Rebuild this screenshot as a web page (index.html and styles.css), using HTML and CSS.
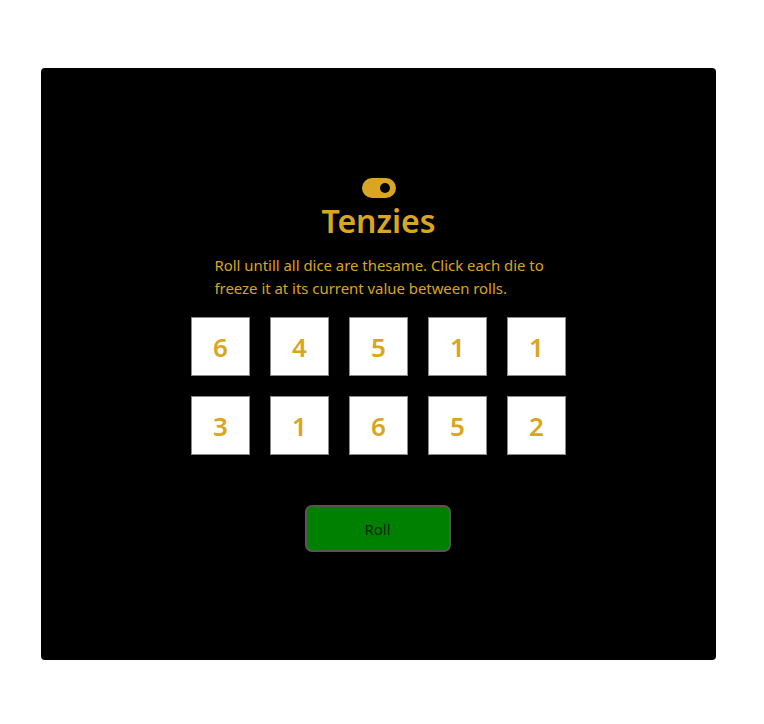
FILE: index.html
```html
<!DOCTYPE html>
<html>
<head>
<meta charset="utf-8">
<link rel="stylesheet" href="styles.css">
</head>
<body>
<main class="board">
  <svg class="logo" viewBox="0 0 34 20" width="34" height="20">
    <rect x="0" y="0" width="34" height="20" rx="10" fill="#DAA520"/>
    <circle cx="23" cy="10" r="5" fill="#000"/>
  </svg>
  <h1 class="title">Tenzies</h1>
  <p class="intro">Roll untill all dice are thesame. Click each die to freeze it at its current value between rolls.</p>
  <div class="dice">
    <div class="die">6</div>
    <div class="die">4</div>
    <div class="die">5</div>
    <div class="die">1</div>
    <div class="die">1</div>
    <div class="die">3</div>
    <div class="die">1</div>
    <div class="die">6</div>
    <div class="die">5</div>
    <div class="die">2</div>
  </div>
  <button class="roll">Roll</button>
</main>
</body>
</html>
```
FILE: styles.css
```css
html, body {
  margin: 0;
  padding: 0;
  background: #fff;
}
body {
  padding: 68px 48px 0 41px;
  font-family: "Noto Sans", "Open Sans", sans-serif;
}
.board {
  width: 675px;
  height: 592px;
  box-sizing: border-box;
  background: #000;
  border-radius: 4px;
  display: flex;
  flex-direction: column;
  align-items: center;
  padding-top: 110px;
}
.logo {
  display: block;
}
.title {
  margin: 3px 0 0;
  color: #DAA520;
  font-size: 32px;
  font-weight: 600;
  line-height: 40px;
}
.intro {
  margin: 13px 0 0;
  width: 330px;
  padding-left: 2px;
  color: #DAA520;
  font-size: 14.9px;
  line-height: 23px;
}
.dice {
  margin-top: 17px;
  display: grid;
  grid-template-columns: repeat(5, 59px);
  grid-auto-rows: 59px;
  gap: 20px;
}
.die {
  background: #fff;
  border: 1px solid #8a8a8a;
  box-sizing: border-box;
  display: flex;
  align-items: center;
  justify-content: center;
  color: #DAA520;
  font-size: 26px;
  font-weight: 600;
}
.roll {
  margin: 50px 2px 0 0;
  width: 146px;
  height: 47px;
  background: #008000;
  border: 2px solid #555;
  border-radius: 7px;
  color: #0a2a0a;
  font-family: inherit;
  font-size: 15px;
}
```
